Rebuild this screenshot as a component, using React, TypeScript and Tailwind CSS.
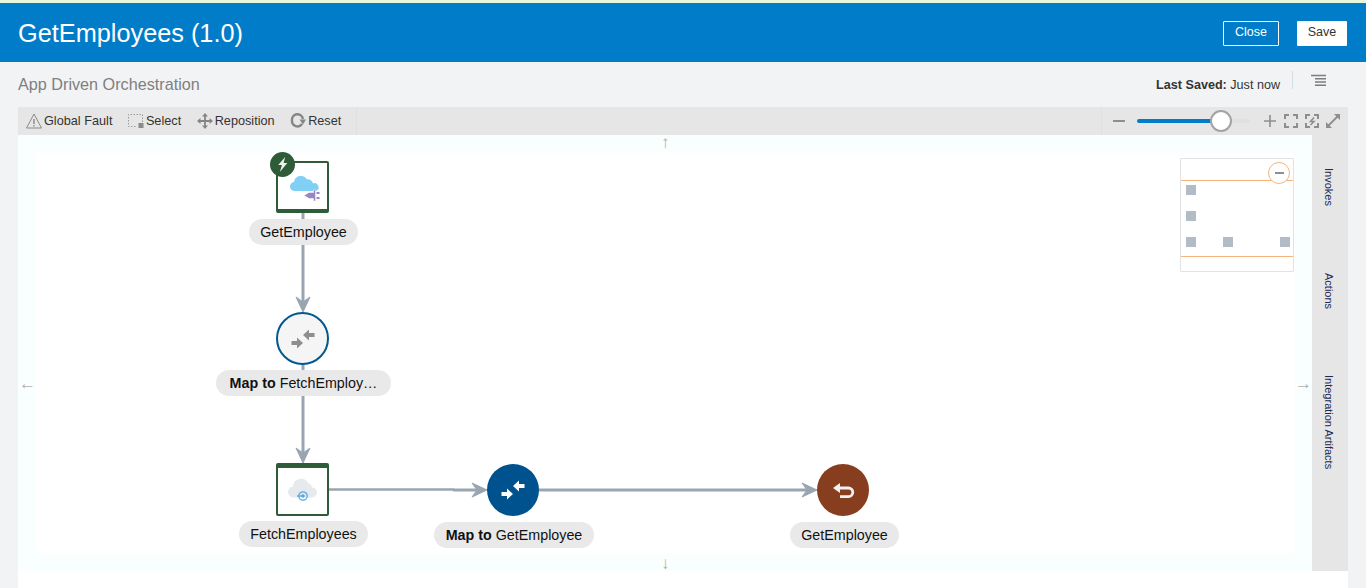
import { ReactNode } from "react";

const FONT = "font-['Liberation_Sans',Arial,sans-serif]";

// toolbar glyphs
function WarnIcon() {
    return (
        <svg width="16" height="16" viewBox="0 0 16 16" fill="none" stroke="#8a8a8a" strokeWidth="1">
            <path d="M8 1 15.500 15H.5Z" strokeLinejoin="round" />
            <path d="M8 6v5M8 12v1.500" strokeWidth="1.400" />
        </svg>
    );
}

function SelectIcon() {
    return (
        <svg width="16" height="16" viewBox="0 0 16 16" fill="none">
            <path d="M14.500 9V1.500H.5v12H9" stroke="#9a9a9a" strokeDasharray="1.500 1.500" />
            <rect x="10.500" y="10" width="5" height="5" fill="#8a8a8a" />
        </svg>
    );
}

function MoveIcon() {
    return (
        <svg width="16" height="16" viewBox="0 0 16 16" fill="#858585" stroke="#858585">
            <path d="M8 2v12M2 8h12" strokeWidth="1.800" />
            <path d="M8 0 11 3.500H5ZM8 16 5 12.500h6ZM0 8 3.500 5v6ZM16 8 12.500 11V5Z" strokeWidth="0" />
        </svg>
    );
}

function ResetIcon() {
    return (
        <svg width="16" height="16" viewBox="0 0 16 16" fill="none">
            <path d="M13 6A5.500 5.500 0 0 0 2 7.500a5.500 5.500 0 0 0 10 3.500" stroke="#858585" strokeWidth="2.400" />
            <path d="M16 6.500H9.500l3.500 5Z" fill="#858585" />
        </svg>
    );
}

function ToolBtn({ icon, label }: { icon: ReactNode; label: string }) {
    return (
        <div className="flex items-center gap-[2px]">
            {icon}
            <span className="mt-px text-[12.7px] text-[#333]">{label}</span>
        </div>
    );
}

function FitIcon({ flash }: { flash?: boolean }) {
    return (
        <svg width="14" height="14" viewBox="0 0 14 14" fill="none" stroke="#8e8e8e" strokeWidth="2">
            <path d="M1 5V1h4M9 1h4v4M13 9v4H9M5 13H1V9" />
            {flash && <path d="M9 3.500 5.500 7.500h3.500L5.500 11" strokeWidth="1.500" />}
        </svg>
    );
}

// merge-arrows glyph used by the map nodes
function MapGlyph({ color }: { color: string }) {
    return (
        <svg width="24" height="24" viewBox="0 0 24 24" fill={color}>
            <path d="M12 8 18 2.500V6H23.500V10H18V13.500Z" />
            <path d="M12 16 6 10.500V14H.5V18H6V21.500Z" />
        </svg>
    );
}

function Pill({ children, className }: { children: ReactNode; className?: string }) {
    return (
        <div className={`h-[26px] pt-px rounded-[13px] bg-[#e9e9e9] flex items-center justify-center text-[14.3px] text-[#111] whitespace-nowrap ${className ?? ""}`}>
            {children}
        </div>
    );
}

function ArrowDown({ x, y1, y2 }: { x: number; y1: number; y2: number }) {
    return (
        <g fill="#99a5b1">
            <path d={`M${x} ${y1}V${y2 - 6}`} stroke="#99a5b1" strokeWidth="3" />
            <path d={`M${x} ${y2}L${x - 7} ${y2 - 15}L${x} ${y2 - 10}L${x + 7} ${y2 - 15}Z`} stroke="#99a5b1" strokeWidth="1" strokeLinejoin="round" />
        </g>
    );
}

function ArrowRight({ x1, x2, y }: { x1: number; x2: number; y: number }) {
    return (
        <g fill="#99a5b1">
            <path d={`M${x1} ${y}H${x2 - 6}`} stroke="#99a5b1" strokeWidth="3" />
            <path d={`M${x2} ${y}L${x2 - 15} ${y - 7}L${x2 - 10} ${y}L${x2 - 15} ${y + 7}Z`} stroke="#99a5b1" strokeWidth="1" strokeLinejoin="round" />
        </g>
    );
}

function Dot({ className }: { className?: string }) {
    return <div className={`w-[10px] h-[10px] bg-[#b1bcc7] ${className ?? ""}`} />;
}

function SideLabel({ children, className }: { children: ReactNode; className?: string }) {
    return <span className={`[writing-mode:vertical-rl] ${className ?? ""}`}>{children}</span>;
}

export default function App() {
    return (
        <div className={`w-[1366px] h-[588px] overflow-hidden bg-[#f2f3f5] ${FONT}`}>
            <div className="h-[3px] bg-[#e8f6dc]" />
            <header className="h-[59px] bg-[#007cc8] flex items-center justify-between pl-[18px] pr-[19px]">
                <h1 className="mt-[2px] text-[25.3px] text-white">GetEmployees (1.0)</h1>
                <div className="flex items-center gap-[18px] mt-[2px]">
                    <button className="w-[56px] h-[25px] border border-white text-white text-[12.5px] pb-[3px] rounded-[1px]">Close</button>
                    <button className="w-[50px] h-[25px] bg-white text-[#333] text-[12.5px] pb-[3px] rounded-[1px]">Save</button>
                </div>
            </header>

            <div className="h-[45px] flex items-start justify-between pl-[18px] pr-[40px]">
                <span className="mt-[10px] text-[16.2px] text-[#7f7f7f]">App Driven Orchestration</span>
                <div className="flex items-start">
                    <span className="mt-[14px] text-[12.6px] text-[#333]">
                        <b>Last Saved:</b> Just now
                    </span>
                    <div className="ml-[12px] mt-[9px] w-px h-[18px] bg-[#d5dde3]" />
                    <svg className="ml-[18px] mt-[12px]" width="15" height="13" viewBox="0 0 15 13" stroke="#7d7d7d" strokeWidth="1.400">
                        <path d="M0 1.500h15M4 4.800h11M4 8h11M4 11.300h11" />
                    </svg>
                </div>
            </div>

            <div className="mx-[18px] w-[1330px] h-[28px] bg-[#e6e6e6] flex items-center">
                <div className="h-full w-[339px] border-r border-[#e0e0e0] flex items-center gap-[15.500px] pl-[8px]">
                    <ToolBtn icon={<WarnIcon />} label="Global Fault" />
                    <ToolBtn icon={<SelectIcon />} label="Select" />
                    <ToolBtn icon={<MoveIcon />} label="Reposition" />
                    <ToolBtn icon={<ResetIcon />} label="Reset" />
                </div>
                <div className="ml-auto w-[247px] h-full border-l border-[#e0e0e0] pl-[11px] flex items-center">
                    <div className="w-[12px] h-[2px] bg-[#8e8e8e]" />
                    <div className="ml-[12px] w-[113px] h-[4px] rounded-full bg-[#e0e0e0] relative">
                        <div className="h-full w-[75px] rounded-full bg-[#007cc8]" />
                        <div className="absolute left-[73px] -top-[9px] w-[22px] h-[22px] rounded-full bg-white border-2 border-[#a3a3a3]" />
                    </div>
                    <svg className="ml-[14px]" width="12" height="12" viewBox="0 0 12 12" stroke="#8e8e8e" strokeWidth="1.600">
                        <path d="M6 0v12M0 6h12" />
                    </svg>
                    <div className="ml-[8px] flex gap-[7px]">
                        <FitIcon />
                        <FitIcon flash />
                        <svg width="14" height="14" viewBox="0 0 14 14" fill="#8e8e8e" stroke="#8e8e8e">
                            <path d="M2.500 11.500 11.500 2.500" strokeWidth="1.800" />
                            <path d="M8 0h6v6ZM0 8v6h6Z" strokeWidth="0" />
                        </svg>
                    </div>
                </div>
            </div>

            <div className="mx-[18px] w-[1330px] flex">
                <div className="w-[1294px] h-[436px] bg-[#f8fffe] p-[18px] relative">
                    <div className="w-[1259px] h-[400px] bg-white" />

                    <span className="absolute left-[643px] -top-[1px] text-[#b0b0b0] text-[17px] leading-[17px]">↑</span>
                    <span className="absolute left-[643px] -bottom-[1px] text-[#b0b0b0] text-[17px] leading-[17px]">↓</span>
                    <span className="absolute left-[1px] top-[240px] text-[#b0b0b0] text-[17px] leading-[17px]">←</span>
                    <span className="absolute right-[0px] top-[240px] text-[#b0b0b0] text-[17px] leading-[17px]">→</span>

                    {/* connector lines between the diagram nodes */}
                    <svg className="absolute left-0 top-0" width="1294" height="436">
                        <ArrowDown x={285} y1={74} y2={177} />
                        <ArrowDown x={285} y1={225} y2={328} />
                        <path d="M311 354.500H436" stroke="#99a5b1" strokeWidth="2.500" />
                        <ArrowRight x1={435} x2={469} y={355} />
                        <ArrowRight x1={518} x2={799} y={355} />
                    </svg>

                    <div className="absolute left-[258px] top-[26px] w-[53px] h-[52px] bg-white border-2 border-[#2f5c38] border-b-[4px] rounded-[2px] flex items-center justify-center">
                        <svg width="32" height="28" viewBox="0 0 32 28" className="ml-[4px] mt-[6px]">
                            <path d="M6 16a4.500 4.500 0 0 1-1-9 7 7 0 0 1 13-2.500 5 5 0 0 1 6 4 4 4 0 0 1 3 7.500Z" fill="#80cff5" />
                            <path d="M15 20.500 20 17.500H24.500V15H26.500V26H24.500V23.500H20Z" fill="#9a84c4" stroke="#fff" strokeWidth="0.500" />
                            <path d="M27.500 17h3v2h-3ZM27.500 22h3v2h-3Z" fill="#9a84c4" />
                        </svg>
                    </div>
                    <div className="absolute left-[252px] top-[17px] w-[25px] h-[25px] rounded-full bg-[#2f5c38] flex items-center justify-center">
                        <svg width="13" height="15" viewBox="0 0 12 14" fill="#eef2ee">
                            <path d="M8.500 0 2 7.500h3.500L3.500 14l7-8.500H7Z" />
                        </svg>
                    </div>
                    <Pill className="absolute left-[231px] top-[84px] w-[109px]">GetEmployee</Pill>

                    <div className="absolute left-[258px] top-[177px] w-[53px] h-[53px] rounded-full bg-[#f5f5f5] border-2 border-[#00588f] flex items-center justify-center">
                        <MapGlyph color="#8e8e8e" />
                    </div>
                    <Pill className="absolute left-[198px] top-[235px] w-[175px]">
                        <span><b>Map to</b> FetchEmploy…</span>
                    </Pill>

                    <div className="absolute left-[258px] top-[328px] w-[53px] h-[53px] bg-white border-2 border-t-[5px] border-[#2f5c38] rounded-[2px] flex items-center justify-center">
                        <svg width="30" height="26" viewBox="0 0 30 26">
                            <path d="M6 19.500a5.500 5.500 0 0 1-1-11 8 8 0 0 1 15-3.500 5.500 5.500 0 0 1 4 4.500 5 5 0 0 1 0 10Z" fill="#e6e9ee" />
                            <circle cx="15" cy="18" r="4.200" fill="none" stroke="#55a9dc" strokeWidth="1.300" />
                            <circle cx="15" cy="18" r="1.800" fill="#55a9dc" />
                            <path d="M9 18h5" stroke="#55a9dc" strokeWidth="1.300" />
                        </svg>
                    </div>
                    <Pill className="absolute left-[221px] top-[386px] w-[129px]">FetchEmployees</Pill>

                    <div className="absolute left-[469px] top-[329px] w-[52px] h-[52px] rounded-full bg-[#00528f] flex items-center justify-center">
                        <MapGlyph color="#fff" />
                    </div>
                    <Pill className="absolute left-[416px] top-[387px] w-[160px]">
                        <span><b>Map to</b> GetEmployee</span>
                    </Pill>

                    <div className="absolute left-[799px] top-[329px] w-[52px] h-[52px] rounded-full bg-[#873e1e] flex items-center justify-center">
                        <svg width="24" height="20" viewBox="0 0 24 20" fill="none" stroke="#f2f2f2" strokeWidth="2.800">
                            <path d="M8 8H17.500a4.300 4.300 0 0 1 0 8.600H9" />
                            <path d="M2 8 9 3V13Z" fill="#f2f2f2" strokeWidth="0" />
                        </svg>
                    </div>
                    <Pill className="absolute left-[772px] top-[387px] w-[109px]">GetEmployee</Pill>

                    {/* overview map */}
                    <div className="absolute left-[1162px] top-[23px] w-[114px] h-[114px] bg-white border border-[#dfe3e6] rounded-[1px] flex flex-col gap-[16px] pt-[26px] pl-[5px]">
                        <div className="absolute left-0 right-0 top-[21px] h-[77px] border-y border-[#f5b47e]" />
                        <div className="absolute left-[87px] top-[3px] w-[22px] h-[22px] rounded-full bg-white border border-[#f5b47e] flex items-center justify-center">
                            <div className="w-[9px] h-[2px] bg-[#8e8e8e]" />
                        </div>
                        <Dot />
                        <Dot />
                        <div className="flex">
                            <Dot />
                            <Dot className="ml-[27px]" />
                            <Dot className="ml-[47px]" />
                        </div>
                    </div>
                </div>

                <div className="w-[36px] h-[436px] bg-[#e6e6e6] text-[11px] text-[#1c2a55] flex flex-col items-center pr-[3px] pt-[33px]">
                    <SideLabel>Invokes</SideLabel>
                    <SideLabel className="mt-[67px]">Actions</SideLabel>
                    <SideLabel className="mt-[66px]">Integration Artifacts</SideLabel>
                </div>
            </div>
            <div className="mx-[18px] w-[1330px] h-[17px] bg-white" />
        </div>
    );
}
